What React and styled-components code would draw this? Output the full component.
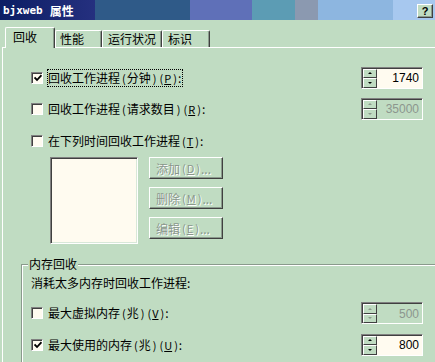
import React from 'react';
import styled, { createGlobalStyle } from 'styled-components';

const BG = '#c0dcc2';
const CJK = '"Noto Sans CJK SC", "Liberation Sans", sans-serif';

const Global = createGlobalStyle`
  html, body { margin: 0; padding: 0; background: ${BG}; overflow: hidden; }
  body { font-family: ${CJK}; font-size: 12px; color: #000; }
`;

const Window = styled.div`
  width: 435px;
  height: 362px;
  overflow: hidden;
  display: flex;
  flex-direction: column;
  background: ${BG};
`;

const TitleBar = styled.div`
  height: 20px;
  flex: none;
  box-sizing: border-box;
  display: flex;
  align-items: center;
  justify-content: space-between;
  padding: 1px 2px 0 3px;
  background: linear-gradient(
    to right,
    #0b1d64 0px, #25307f 95px,
    #2f5a88 95px, #2f5a88 190px,
    #5f70b8 190px, #5f70b8 252px,
    #5c9cb4 252px, #5c9cb4 295px,
    #8b99b0 295px, #8b99b0 318px,
    #8db6e0 318px, #8db6e0 393px,
    #a7c8ef 393px
  );
`;

const TitleText = styled.div`
  color: #fff;
  font-weight: bold;
  display: flex;
  align-items: center;
  gap: 7px;
  line-height: 14px;
`;

const Mono = styled.span`
  font-family: "DejaVu Sans Mono", "Liberation Mono", monospace;
  font-size: 11px;
  font-weight: bold;
`;

const Cjk = styled.span`
  font-family: ${CJK};
  font-size: 12px;
  font-weight: bold;
`;

const HelpButton = styled.div`
  width: 16px;
  height: 14px;
  box-sizing: border-box;
  background: ${BG};
  border-top: 1px solid #fff;
  border-left: 1px solid #fff;
  border-right: 1px solid #404040;
  border-bottom: 1px solid #404040;
  box-shadow: inset -1px -1px 0 #8a9a8c;
  display: flex;
  align-items: center;
  justify-content: center;
  font: bold 11px "Liberation Sans", sans-serif;
  color: #000;
`;

const TabStrip = styled.div`
  display: flex;
  align-items: flex-end;
  height: 19px;
  margin-top: 8px;
  padding-left: 5px;
  position: relative;
  z-index: 1;
  flex: none;
`;

const Tab = styled.div`
  box-sizing: border-box;
  width: ${p => p.$w}px;
  height: ${p => (p.$active ? 21 : 17)}px;
  margin-bottom: ${p => (p.$active ? -1 : 0)}px;
  padding-left: ${p => p.$pl}px;
  padding-bottom: ${p => (p.$active ? 3 : 0)}px;
  background: ${BG};
  border-left: 1px solid #fff;
  border-top: 1px solid #fff;
  border-right: 1px solid #404040;
  border-top-left-radius: 2px;
  border-top-right-radius: 2px;
  box-shadow: inset -1px 0 0 #8a9a8c;
  display: flex;
  align-items: center;
  font-size: 12px;
  line-height: 14px;
`;

const Panel = styled.div`
  flex: 1;
  margin-left: 2px;
  border-top: 1px solid #fff;
  border-left: 1px solid #fff;
  padding-left: 18px;
  display: flex;
  flex-direction: column;
`;

const Section = styled.div`
  margin-left: 10px;
  display: flex;
  flex-direction: column;
`;

const Row = styled.div`
  display: flex;
  align-items: center;
  justify-content: space-between;
  width: 392px;
  height: ${p => p.$h}px;
  margin-top: ${p => p.$mt}px;
  flex: none;
`;

const CheckWrap = styled.div`
  display: flex;
  align-items: center;
`;

const Box = styled.span`
  width: 12px;
  height: 12px;
  box-sizing: border-box;
  flex: none;
  border-top: 1px solid #808080;
  border-left: 1px solid #808080;
  border-right: 1px solid #fff;
  border-bottom: 1px solid #fff;
  box-shadow: inset 1px 1px 0 #404040;
  background: #fffbf0;
  display: flex;
  align-items: center;
  justify-content: center;
  padding: 1px 0 0 1px;
`;

const Label = styled.span`
  margin-left: 4px;
  padding: 1px 1px 1px 0;
  border: 1px dotted ${p => (p.$focus ? '#000' : 'transparent')};
  line-height: 13px;
  font-size: 12px;
  white-space: pre;
`;

const Paren = styled.span`
  font-size: 11px;
  margin: 0 1px 0 2px;
`;

const Acc = styled.span`
  text-decoration: underline;
  font-size: 11px;
`;

const Spin = styled.div`
  display: flex;
  width: 62px;
  height: 22px;
  box-sizing: border-box;
  border-top: 1px solid #808080;
  border-left: 1px solid #808080;
  border-right: 1px solid #fff;
  border-bottom: 1px solid #fff;
  box-shadow: inset 1px 1px 0 #404040;
  padding: 1px 0 0 1px;
  flex: none;
`;

const SpinButtons = styled.div`
  width: 14px;
  display: flex;
  flex-direction: column;
  flex: none;
`;

const SpinBtn = styled.div`
  flex: 1;
  box-sizing: border-box;
  background: ${BG};
  border-top: 1px solid #fff;
  border-left: 1px solid #fff;
  border-right: 1px solid #404040;
  border-bottom: 1px solid #404040;
  display: flex;
  align-items: center;
  justify-content: center;
  &::after {
    content: '';
    width: 0;
    height: 0;
    border-left: 2px solid transparent;
    border-right: 2px solid transparent;
    ${p => (p.$up ? 'border-bottom' : 'border-top')}: 2px solid ${p => (p.$disabled ? '#8a9a8c' : '#000')};
  }
`;

const Field = styled.div`
  flex: 1;
  background: ${p => (p.$disabled ? BG : '#fffbf0')};
  color: ${p => (p.$disabled ? '#8c968e' : '#000')};
  font: 12px "Liberation Sans", sans-serif;
  display: flex;
  align-items: center;
  justify-content: flex-end;
  padding-right: 3px;
`;

const ListArea = styled.div`
  display: flex;
  margin-top: 10px;
  margin-left: 19px;
  gap: 11px;
  flex: none;
`;

const ListBox = styled.div`
  width: 88px;
  height: 87px;
  box-sizing: border-box;
  background: #fffbf0;
  border-top: 1px solid #808080;
  border-left: 1px solid #808080;
  border-right: 1px solid #fff;
  border-bottom: 1px solid #fff;
  box-shadow: inset 1px 1px 0 #404040, inset -1px -1px 0 #d8e8d8;
`;

const ButtonCol = styled.div`
  display: flex;
  flex-direction: column;
  gap: 8px;
`;

const CmdButton = styled.div`
  width: 74px;
  height: 22px;
  box-sizing: border-box;
  background: ${BG};
  color: #8a978c;
  text-shadow: 1px 1px 0 #fff;
  border-top: 1px solid #fff;
  border-left: 1px solid #fff;
  border-right: 1px solid #404040;
  border-bottom: 1px solid #404040;
  box-shadow: inset -1px -1px 0 #8a9a8c;
  display: flex;
  align-items: center;
  padding-left: 6px;
  font-size: 12px;
  white-space: pre;
`;

const Group = styled.fieldset`
  margin: 13px 0 0 0;
  padding: 0 0 20px 9px;
  width: 430px;
  box-sizing: border-box;
  border: 1px solid #8a9a8c;
  box-shadow: inset 1px 1px 0 #fff, 1px 1px 0 #fff;
  flex: none;
`;

const Legend = styled.legend`
  margin-left: -3px;
  padding: 0 1px;
  background: ${BG};
  line-height: 14px;
  font-size: 12px;
`;

const GroupText = styled.div`
  margin-top: 5px;
  line-height: 14px;
  font-size: 12px;
`;

const Check = () => (
  <svg width="8" height="8" viewBox="0 0 8 8">
    <path d="M0.5 3.5 L3 6 L7.5 1.2" fill="none" stroke="#000" strokeWidth="1.8" />
  </svg>
);

const CheckBox = ({ checked, focus, children }) => (
  <CheckWrap>
    <Box>{checked && <Check />}</Box>
    <Label $focus={focus}>{children}</Label>
  </CheckWrap>
);

const Spinner = ({ value, disabled }) => (
  <Spin>
    <SpinButtons>
      <SpinBtn $up $disabled={disabled} />
      <SpinBtn $disabled={disabled} />
    </SpinButtons>
    <Field $disabled={disabled}>{value}</Field>
  </Spin>
);

const Key = ({ k }) => (
  <>
    <Paren>(</Paren><Acc>{k}</Acc><Paren>)</Paren>
  </>
);

const Unit = ({ t }) => (
  <>
    <Paren>(</Paren>{t}<Paren>)</Paren>
  </>
);

export default function App() {
  return (
    <Window>
      <Global />
      <TitleBar>
        <TitleText>
          <Mono>bjxweb</Mono>
          <Cjk>属性</Cjk>
        </TitleText>
        <HelpButton>?</HelpButton>
      </TitleBar>
      <TabStrip>
        <Tab $active $w={50} $pl={7}>回收</Tab>
        <Tab $w={47} $pl={4}>性能</Tab>
        <Tab $w={60} $pl={5}>运行状况</Tab>
        <Tab $w={48} $pl={5}>标识</Tab>
      </TabStrip>
      <Panel>
        <Section>
          <Row $h={23} $mt={18}>
            <CheckBox checked focus>
              回收工作进程<Unit t="分钟" /><Key k="P" />:
            </CheckBox>
            <Spinner value="1740" />
          </Row>
          <Row $h={23} $mt={8}>
            <CheckBox>
              回收工作进程<Unit t="请求数目" /><Key k="R" />:
            </CheckBox>
            <Spinner value="35000" disabled />
          </Row>
          <Row $h={13} $mt={14}>
            <CheckBox>
              在下列时间回收工作进程<Key k="T" />:
            </CheckBox>
          </Row>
          <ListArea>
            <ListBox />
            <ButtonCol>
              <CmdButton>添加<Key k="D" />...</CmdButton>
              <CmdButton>删除<Key k="M" />...</CmdButton>
              <CmdButton>编辑<Key k="E" />...</CmdButton>
            </ButtonCol>
          </ListArea>
        </Section>
        <Group>
          <Legend>内存回收</Legend>
          <GroupText>消耗太多内存时回收工作进程:</GroupText>
          <Row $h={22} $mt={12}>
            <CheckBox>
              最大虚拟内存<Unit t="兆" /><Key k="V" />:
            </CheckBox>
            <Spinner value="500" disabled />
          </Row>
          <Row $h={23} $mt={9}>
            <CheckBox checked>
              最大使用的内存<Unit t="兆" /><Key k="U" />:
            </CheckBox>
            <Spinner value="800" />
          </Row>
        </Group>
      </Panel>
    </Window>
  );
}
